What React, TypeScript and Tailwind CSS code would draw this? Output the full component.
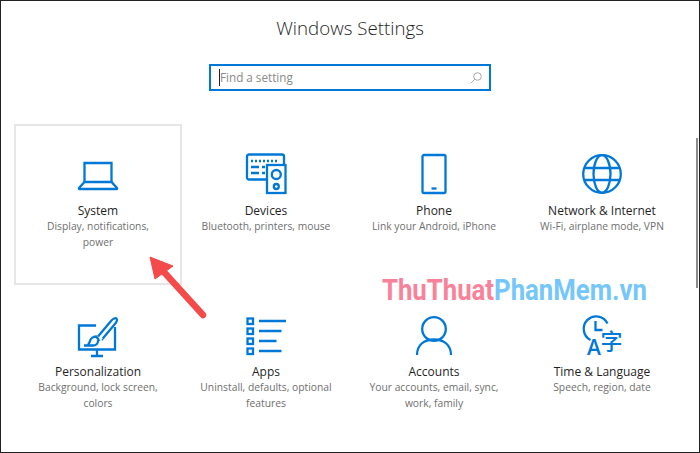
const BLUE = "#0078d7";

const icons: Record<string, React.ReactNode> = {
  laptop: (
    <>
      <path d="M6.500 28V9h27v19" />
      <path d="M6.500 28h27l5.500 6a.6.6 0 0 1-.5 1H1.500a.6.6 0 0 1-.5-1z" />
    </>
  ),
  devices: (
    <>
      <path d="M20 25.500H3a2 2 0 0 1-2-2V2.500a2 2 0 0 1 2-2h33a2 2 0 0 1 2 2v8" />
      <rect x="21" y="11" width="18.500" height="28" />
      <circle cx="30.300" cy="20.500" r="4.500" />
      <circle cx="30.300" cy="32.500" r="2.500" />
      <path d="M5 7h2m2 0h2m2 0h2m2 0h2m2 0h2m2 0h2m2 0h2M5 13h8m3 0h3M5 19h8m3 0h3" />
    </>
  ),
  phone: (
    <>
      <rect x="8.500" y="1" width="23" height="38" rx="1.500" />
      <path d="M17.500 34.500h5" />
    </>
  ),
  globe: (
    <>
      <circle cx="20" cy="20" r="18.800" />
      <ellipse cx="20" cy="20" rx="8.500" ry="18.800" />
      <path d="M2.500 14h35M2.500 26h35" />
    </>
  ),
  brush: (
    <>
      <path d="M18 10.500H1v24h36V12" />
      <path d="M13 41h12M19 35v6" />
      <path d="M6 30.500h9c3 0 5-2 5-4.500l1-1-3-3.500c-3 0-5.500 2-6 4.500-.3 2-1.500 3-2.500 4.500" />
      <path d="M20 21.500l13-15.500c2-2.500 4.500-3.500 5.500-2.500 1.200 1.200 0 4-2 6L23.500 25" />
      <path d="M22.300 23.100l1.400 1.400" strokeWidth="3" stroke="#ffffff" />
    </>
  ),
  apps: (
    <>
      <rect x="1.500" y="3.500" width="5.500" height="5.500" />
      <rect x="1.500" y="13.500" width="5.500" height="5.500" />
      <rect x="1.500" y="23.500" width="5.500" height="5.500" />
      <rect x="1.500" y="33.500" width="5.500" height="5.500" />
      <path d="M13 6h27M13 16h22.500M13 26h17.500M13 36h22.500" />
    </>
  ),
  person: (
    <>
      <circle cx="20" cy="14" r="11.800" />
      <path d="M3 40c0-10 7-15.500 17-15.500S37 30 37 40" />
    </>
  ),
  time: (
    <>
      <path d="M8.500 25A12.500 12.500 0 1 1 25.500 8.500" />
      <path d="M13.500 6v9h7" />
      <text x="5" y="39.500" fontSize="21" fontFamily="'Open Sans', sans-serif" fontWeight="600" fill={BLUE} stroke="none">A</text>
      <text x="18.500" y="34" fontSize="22" fontFamily="'Noto Sans CJK SC', sans-serif" fontWeight="500" fill={BLUE} stroke="none">字</text>
    </>
  ),
};

const settings = [
  { icon: "laptop", title: "System", lines: ["Display, notifications,", "power"], active: true },
  { icon: "devices", title: "Devices", lines: ["Bluetooth, printers, mouse"] },
  { icon: "phone", title: "Phone", lines: ["Link your Android, iPhone"] },
  { icon: "globe", title: "Network & Internet", lines: ["Wi-Fi, airplane mode, VPN"] },
  { icon: "brush", title: "Personalization", lines: ["Background, lock screen,", "colors"] },
  { icon: "apps", title: "Apps", lines: ["Uninstall, defaults, optional", "features"] },
  { icon: "person", title: "Accounts", lines: ["Your accounts, email, sync,", "work, family"] },
  { icon: "time", title: "Time & Language", lines: ["Speech, region, date"] },
];

function Tile({ icon, title, lines, active }: { icon: string; title: string; lines: string[]; active?: boolean }) {
  return (
    <div
      className={`flex flex-col items-center pt-[28px] text-center border-2 ${
        active ? "border-[#e6e6e6]" : "border-transparent"
      }`}
    >
      <svg
        width="40"
        height="40"
        viewBox="0 0 40 40"
        fill="none"
        stroke={BLUE}
        strokeWidth="2.300"
        className="overflow-visible"
      >
        {icons[icon]}
      </svg>
      <div className="mt-[8px] text-[12px] leading-[17px] text-[#1f1f1f]">{title}</div>
      <div className="text-[10.3px] leading-[15.500px] text-[#6f6f6f]">
        {lines.map((line) => (
          <div key={line}>{line}</div>
        ))}
      </div>
    </div>
  );
}

export default function App() {
  return (
    <div className="relative w-[700px] h-[453px] overflow-hidden border border-[#222222] bg-white font-['Open_Sans',sans-serif]">
      <h1 className="mt-[13px] text-center text-[18.7px] leading-[28px] font-light text-[#1f1f1f]">Windows Settings</h1>

      {/* search box */}
      <div className="mt-[22px] ml-[208px] flex h-[27px] w-[282px] items-center justify-between border-2 border-[#0078d7] pl-[8px] pr-[7px]">
        <div className="flex items-center">
          <span className="h-[17px] w-px bg-[#222222]" />
          <span className="text-[11.7px] text-[#8a8a8a]">Find a setting</span>
        </div>
        <svg width="12" height="12" viewBox="0 0 12 12" fill="none" stroke="#a8a8a8" strokeWidth="1">
          <circle cx="7.500" cy="4.500" r="3.800" />
          <path d="M4.800 7.200L.8 11.200" />
        </svg>
      </div>

      <div className="mt-[33px] ml-[13px] grid w-[672px] grid-cols-4 grid-rows-[161px_161px]">
        {settings.map((s) => (
          <Tile key={s.title} icon={s.icon} title={s.title} lines={s.lines} active={s.active} />
        ))}
      </div>

      {/* scrollbar thumb */}
      <div className="absolute left-[695px] top-[137px] h-[150px] w-[2px] bg-[#8c8c8c]" />

      {/* watermark */}
      <div className="absolute left-[381px] top-[271px] origin-left scale-x-[0.858] whitespace-nowrap font-['Roboto',sans-serif] text-[30px] leading-[36px] font-bold [text-shadow:0_0_3px_#ffffff]">
        <span className="text-[#f9819a]">ThuThuat</span>
        <span className="text-[#74c6fb]">PhanMem.vn</span>
      </div>

      {/* red annotation arrow */}
      <svg className="absolute left-[140px] top-[250px]" width="70" height="72" viewBox="0 0 70 72" fill="none">
        <path d="M62 64L22 20" stroke="#f44a4a" strokeWidth="6.500" strokeLinecap="round" />
        <path d="M9 6L32 15L14 28Z" fill="#f44a4a" stroke="#f44a4a" strokeLinejoin="round" />
      </svg>
    </div>
  );
}
